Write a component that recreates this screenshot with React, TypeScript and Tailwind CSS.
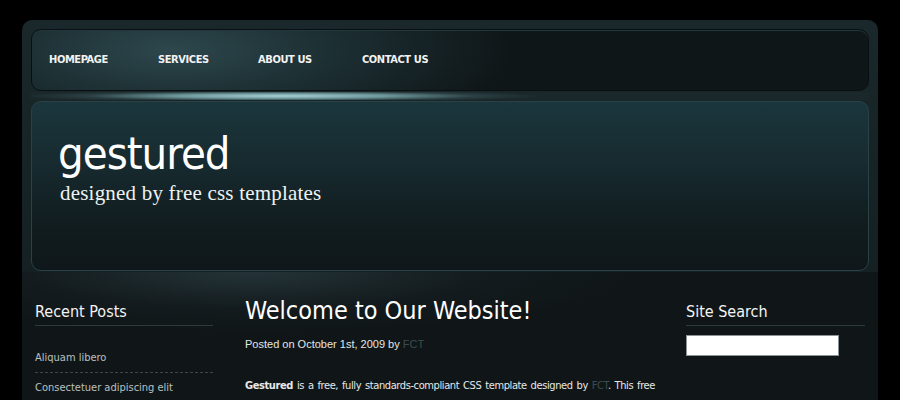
import React from 'react';

const tahoma = "font-['DejaVu_Sans_Condensed','DejaVu_Sans',sans-serif] font-stretch-condensed";

const navItems = [
  { label: 'HOMEPAGE', w: 'w-[109px]' },
  { label: 'SERVICES', w: 'w-[100px]' },
  { label: 'ABOUT US', w: 'w-[104px]' },
  { label: 'CONTACT US', w: 'w-auto' },
];

const recentPosts = ['Aliquam libero', 'Consectetuer adipiscing elit'];

const App: React.FC = () => {
  return (
    <div className="w-[900px] h-[400px] bg-black overflow-hidden pt-[20px] pl-[22px]">
      <div className="w-[856px] h-[400px] rounded-t-[10px] bg-[linear-gradient(180deg,#1a282b_0px,#142022_260px,#0f1517_300px)] pt-[9px] px-[9px]">
        {/* menu */}
        <div className="h-[62px] rounded-[10px] border border-[#0a1012] bg-[radial-gradient(ellipse_340px_100px_at_140px_20px,#2d474d_0%,#1d3034_45%,#0f1618_100%)] shadow-[inset_0_1px_0_#23383c] flex items-center pl-[17px]">
          {navItems.map((item) => (
            <div
              key={item.label}
              className={`${item.w} ${tahoma} text-[11px] font-bold text-[#f2f2f2] tracking-[-0.4px]`}
            >
              {item.label}
            </div>
          ))}
        </div>

        {/* glow strip */}
        <div className="h-[10px] flex items-center">
          <div className="h-[8px] w-full bg-[radial-gradient(ellipse_260px_6px_at_250px_50%,#a8d2d6_0%,#6e989c_40%,#2a3e41_75%,#1a282b_100%)]" />
        </div>

        {/* header */}
        <div className="h-[170px] rounded-[10px] border border-[#2a4145] bg-[linear-gradient(180deg,#1a363c_0%,#172b30_35%,#111d20_70%,#0f171a_100%)] pl-[26px] pt-[25px]">
          <h1 className={`${tahoma} text-[45px] leading-[54px] text-white tracking-[-1px]`}>
            gestured
          </h1>
          <p className="font-['Liberation_Serif','DejaVu_Serif',serif] text-[21px] leading-[24px] text-[#eef2f2] pl-[2px] tracking-[0.2px]">
            designed by free css templates
          </p>
        </div>

        {/* content */}
        <div className="mt-[1px] -mx-[9px] h-[200px] bg-[radial-gradient(ellipse_380px_60px_at_230px_0px,#243337_0%,#131b1e_60%,#101618_100%)] flex pl-[13px] pt-[30px]">
          <div className="w-[178px]">
            <h2 className={`${tahoma} text-[16px] leading-[20px] text-[#f4f4f4] pb-[3px] border-b border-[#2c3a3b]`}>
              Recent Posts
            </h2>
            <ul className="pt-[25px]">
              {recentPosts.map((post, i) => (
                <li
                  key={post}
                  className={`${tahoma} text-[11px] leading-[14px] text-[#b9c0c0] pb-[7px] ${
                    i === 0 ? 'border-b border-dashed border-[#3b4849] mb-[8px]' : ''
                  }`}
                >
                  {post}
                </li>
              ))}
            </ul>
          </div>

          <div className="w-[410px] ml-[32px]">
            <h2 className={`${tahoma} text-[25px] leading-[30px] text-white -mt-[6px]`}>
              Welcome to Our Website!
            </h2>
            <p className="font-['Liberation_Sans',Arial,sans-serif] text-[11px] leading-[14px] text-[#e2e6e6] mt-[11px]">
              Posted on October 1st, 2009 by <span className="text-[#3c4c4e]">FCT</span>
            </p>
            <p className={`${tahoma} text-[11px] leading-[22px] text-[#e6e9e9] mt-[24px] text-justify tracking-[-0.4px]`}>
              <b>Gestured</b> is a free, fully standards-compliant CSS template designed by{' '}
              <span className="text-[#3c4c4e]">FCT</span>. This free template is released under a
              Creative Commons Attributions 2.5 license, so you’re pretty much free to do whatever you
              want with it.
            </p>
          </div>

          <div className="w-[179px] ml-[31px]">
            <h2 className={`${tahoma} text-[16px] leading-[20px] text-[#f4f4f4] pb-[3px] border-b border-[#2c3a3b]`}>
              Site Search
            </h2>
            <input
              type="text"
              className="mt-[9px] w-[153px] h-[21px] bg-white border border-[#8a9496] outline-none"
            />
          </div>
        </div>
      </div>
    </div>
  );
};

export default App;
